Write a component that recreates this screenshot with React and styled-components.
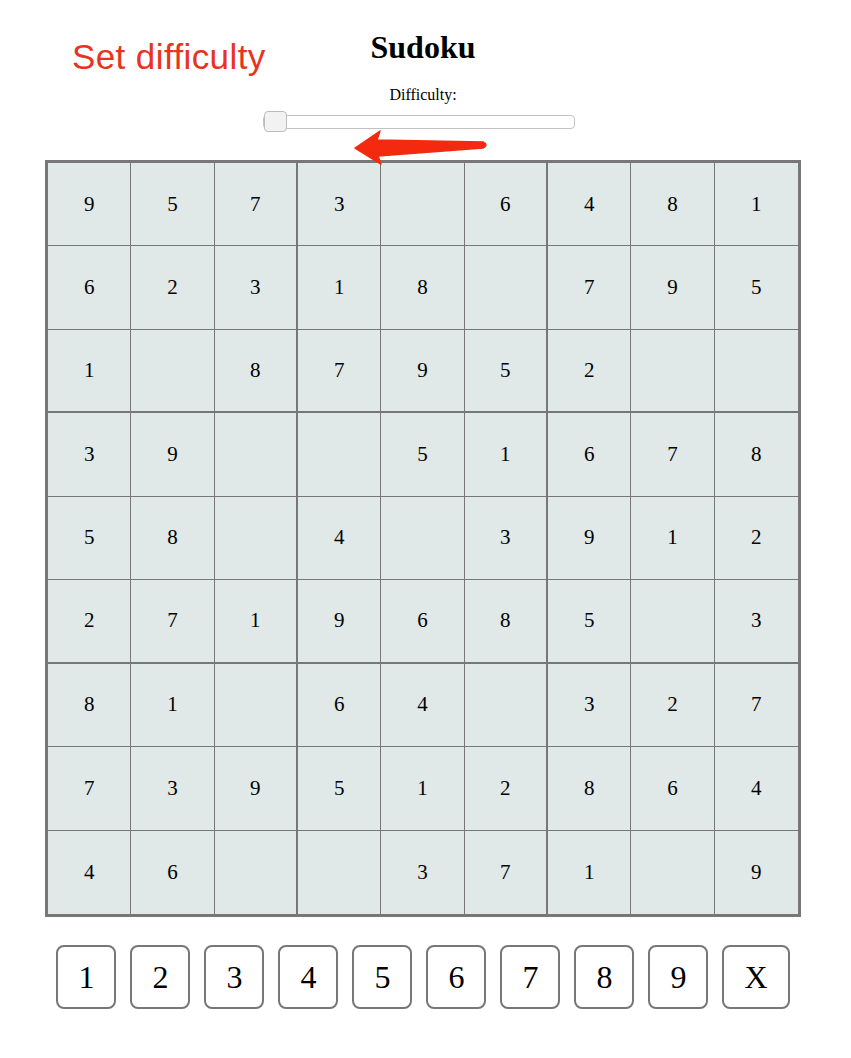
import React from "react"
import styled, { createGlobalStyle } from "styled-components"

const GlobalStyle = createGlobalStyle`
  html, body {
    margin: 0;
    padding: 0;
    background: #fff;
  }
  body {
    font-family: "Liberation Serif", "Times New Roman", serif;
    color: #000;
  }
`

const Page = styled.div`
  position: relative;
  width: 756px;
  margin-left: 45px;
  padding-top: 29px;
  display: flex;
  flex-direction: column;
  align-items: center;
`

const Title = styled.h1`
  margin: 0;
  font-size: 32px;
  line-height: 37px;
  font-weight: bold;
`

const Label = styled.label`
  margin-top: 20px;
  font-size: 16px;
  line-height: 18px;
`

const SliderWrap = styled.div`
  margin-top: 7px;
  padding-right: 8px;
  height: 21px;
  display: flex;
`

const Slider = styled.input`
  -webkit-appearance: none;
  appearance: none;
  width: 312px;
  height: 21px;
  margin: 0;
  background: transparent;

  &::-webkit-slider-runnable-track {
    box-sizing: border-box;
    height: 14px;
    border: 1px solid #c2c2c2;
    border-radius: 4px;
    background: #fff;
  }

  &::-webkit-slider-thumb {
    -webkit-appearance: none;
    box-sizing: border-box;
    width: 23px;
    height: 21px;
    margin-top: -5px;
    border: 1px solid #bcbcbc;
    border-radius: 4px;
    background: #f2f2f2;
  }
`

const Board = styled.div`
  box-sizing: border-box;
  margin-top: 28px;
  width: 756px;
  height: 757px;
  border: 3px solid #777;
  display: grid;
  grid-template-columns: repeat(9, 1fr);
  grid-template-rows: repeat(9, 1fr);
  background: #e1e8e8;
`

const lineWidth = (i) => (i === 8 ? "0" : i % 3 === 2 ? "2px" : "1px")

const Cell = styled.div`
  box-sizing: border-box;
  display: flex;
  align-items: center;
  justify-content: center;
  font-size: 21px;
  border-style: solid;
  border-color: #777;
  border-width: 0 ${(p) => lineWidth(p.$col)} ${(p) => lineWidth(p.$row)} 0;
`

const Keypad = styled.div`
  margin-top: 28px;
  display: flex;
  justify-content: center;
  gap: 14px;
`

const Key = styled.button`
  box-sizing: border-box;
  height: 64px;
  padding: 0 20px;
  border: 2px solid #777;
  border-radius: 8px;
  background: #fff;
  color: #000;
  font-family: "Liberation Serif", "Times New Roman", serif;
  font-size: 32px;
  line-height: 1;
  cursor: pointer;
`

// annotation layer drawn over the page
const Note = styled.div`
  position: absolute;
  left: 27px;
  top: 39px;
  font-family: "Liberation Sans", Arial, sans-serif;
  font-size: 35px;
  letter-spacing: 0.4px;
  line-height: 1;
  color: #e8341f;
  white-space: nowrap;
`

const Arrow = styled.svg`
  position: absolute;
  left: 305px;
  top: 125px;
  overflow: visible;
`

const grid = [
  "9573 6481",
  "62318 795",
  "1 87952  ",
  "39  51678",
  "58 4 3912",
  "2719685 3",
  "81 64 327",
  "739512864",
  "46  371 9",
]

const keys = ["1", "2", "3", "4", "5", "6", "7", "8", "9", "X"]

export default function App() {
  return (
    <>
      <GlobalStyle />
      <Page>
        <Title>Sudoku</Title>
        <Label htmlFor="difficulty">Difficulty:</Label>
        <SliderWrap>
          <Slider id="difficulty" type="range" min="0" max="10" defaultValue="0" />
        </SliderWrap>
        <Board>
          {grid.map((line, r) =>
            line.split("").map((ch, c) => (
              <Cell key={`${r}-${c}`} $row={r} $col={c}>
                {ch.trim()}
              </Cell>
            ))
          )}
        </Board>
        <Keypad>
          {keys.map((k) => (
            <Key key={k}>{k}</Key>
          ))}
        </Keypad>

        <Note>Set difficulty</Note>
        <Arrow width="140" height="40" viewBox="0 0 140 40">
          <path
            d="M5 23 L30 6 L27 15 L133 17 Q139 20 133 23 L28 31 L31 39 Z"
            fill="#f42a10"
            stroke="#f42a10"
            strokeWidth="1.5"
            strokeLinejoin="round"
          />
        </Arrow>
      </Page>
    </>
  )
}
